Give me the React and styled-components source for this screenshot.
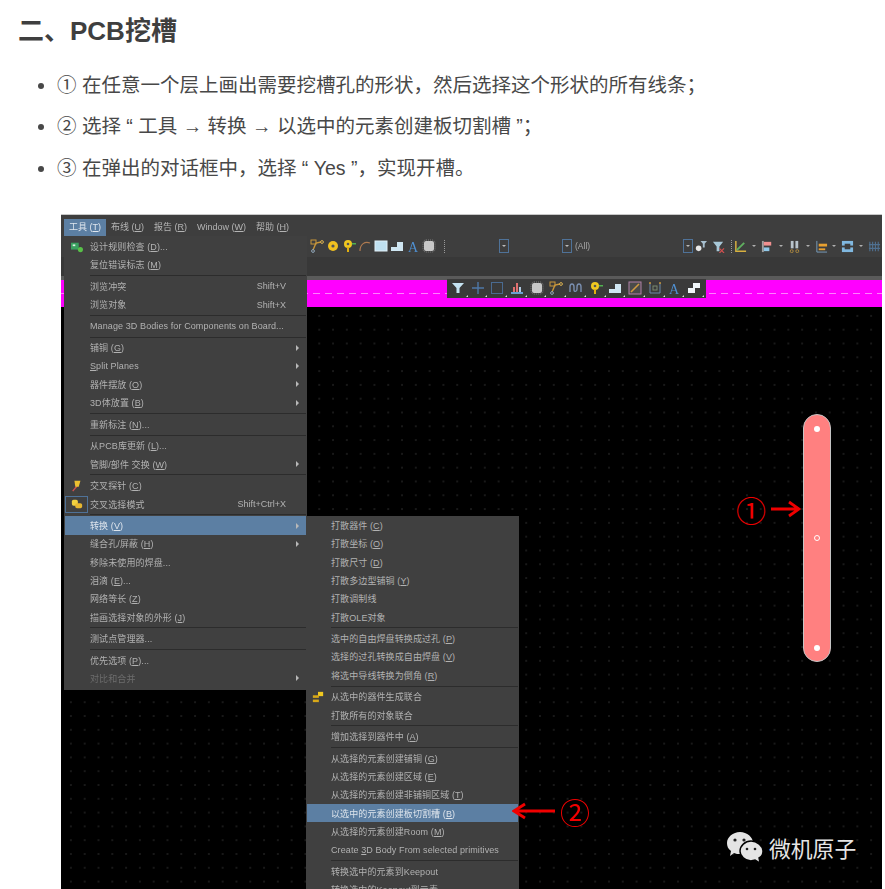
import React from "react";
import styled, { createGlobalStyle } from "styled-components";

const Icons = {
  route: <><path d="M3 11 L6 4 L11 3" stroke="#c8963a" strokeWidth="1.4" fill="none" /><rect x="1" y="1" width="5" height="4" fill="none" stroke="#c8963a" /><circle cx="3" cy="12" r="1.4" fill="none" stroke="#8fa5b8" /><circle cx="12" cy="3" r="1.4" fill="none" stroke="#d8b050" /></>,
  pad: <><circle cx="7" cy="7" r="5" fill="#f0c020" /><circle cx="7" cy="7" r="1.6" fill="#555" /></>,
  key: <><circle cx="6" cy="5" r="4" fill="#f0c820" /><circle cx="6" cy="5" r="1.3" fill="#555" /><rect x="5" y="8" width="2" height="5" fill="#e0b010" /><rect x="10" y="4" width="4" height="1.5" fill="#50b050" /></>,
  arc: <path d="M2 12 C2 5 7 2 12 4" stroke="#b07a50" strokeWidth="1.2" fill="none" />,
  rect: <rect x="1" y="2" width="12" height="10" fill="#bfe0f0" stroke="#e0f0f8" />,
  poly: <path d="M1 12 L1 8 L7 8 L7 3 L13 3 L13 12 Z" fill="#cfe6f2" />,
  text: <text x="7" y="12.5" fontSize="14" fontFamily="Liberation Serif, serif" fill="#4f8fd0" textAnchor="middle">A</text>,
  chip: <><rect x="2" y="2" width="10" height="10" rx="2" fill="#c8c8c8" /><rect x="1" y="1" width="12" height="12" rx="3" fill="none" stroke="#808080" strokeDasharray="1 1" /></>,
  funnel: <path d="M1 2 H13 L8.5 7 V12 H5.5 V7 Z" fill="#c5e3f2" />,
  plus: <path d="M7 1 V13 M1 7 H13" stroke="#4f78a8" strokeWidth="1.4" />,
  square: <rect x="1.5" y="1.5" width="11" height="11" fill="none" stroke="#4a6a90" />,
  bars: <><rect x="1" y="11" width="12" height="2" fill="#6aa0d0" /><rect x="3" y="6" width="2" height="5" fill="#e07070" /><rect x="6" y="2" width="2" height="9" fill="#e07070" /><rect x="9" y="6" width="2" height="5" fill="#b0c8e0" /></>,
  wave: <path d="M1 11 V6 C1 2 5 2 5 6 V9 C5 11 8 11 8 8 V6 C8 2 12 2 12 6 V11" stroke="#7a8fb0" strokeWidth="1.4" fill="none" />,
  boxLine: <><rect x="1" y="1" width="12" height="12" fill="#4a4a4a" stroke="#b080a8" /><path d="M3 11 L11 3" stroke="#d09a40" strokeWidth="1.6" /></>,
  cup: <><path d="M2 2 V12 H12 V2" stroke="#6a88a8" fill="none" /><rect x="5" y="5" width="4" height="4" fill="none" stroke="#7a8a70" /><circle cx="2" cy="2" r="1" fill="#c8963a" /><circle cx="12" cy="2" r="1" fill="#c8963a" /></>,
  stairs: <path d="M1 12 V7 H6 V2 H13 V7 H8 V12 Z" fill="#f0f6fa" />,
  searchFilter: <><circle cx="5" cy="9" r="3" fill="#e8e8e8" /><path d="M7 1 H14 L11.5 4 V8 H9.5 V4 Z" fill="#a8c0d0" /></>,
  redFilter: <><path d="M1 2 H12 L8 7 V12 H5 V7 Z" fill="#a8c8d8" /><path d="M8 9 L13 14 M13 9 L8 14" stroke="#d05050" strokeWidth="1.2" /></>,
  align: <><path d="M2 1 V12 H13" stroke="#d8b040" strokeWidth="1.6" fill="none" /><path d="M3 11 L11 3" stroke="#60b060" strokeWidth="2" /></>,
  pink: <><rect x="1" y="1" width="2" height="12" fill="#a0a0a0" /><rect x="3" y="2" width="8" height="4" fill="#f09090" /><rect x="3" y="8" width="6" height="4" fill="#90c8e8" /></>,
  binoculars: <><rect x="3" y="1" width="3" height="8" fill="#b8c4cc" /><rect x="8" y="1" width="3" height="8" fill="#b8c4cc" /><circle cx="4" cy="12" r="1.6" fill="none" stroke="#b08a40" /><circle cx="10" cy="12" r="1.6" fill="none" stroke="#b08a40" /></>,
  orange: <><path d="M2 1 V13 H13" stroke="#7aa0c0" fill="none" /><rect x="4" y="4" width="9" height="3" fill="#e8a030" /><rect x="4" y="9" width="7" height="2" fill="#e8a030" /></>,
  blueSwap: <><rect x="1" y="1" width="12" height="5" fill="#80b8e0" /><rect x="1" y="8" width="12" height="5" fill="#80b8e0" /><rect x="4" y="4" width="6" height="6" fill="#3e3e3e" /></>,
  grid: <path d="M2 2 V12 M5 2 V12 M8 2 V12 M11 2 V12 M1 5 H13 M1 9 H13" stroke="#4f7090" strokeWidth="1.2" />,
  drc: <><rect x="0" y="2" width="9" height="8" fill="#3aa060" /><rect x="2" y="4" width="3" height="2" fill="#d8f0e0" /><circle cx="11" cy="10" r="3" fill="#58c048" /></>,
  probe: <><path d="M2 13 L7 7" stroke="#d05050" strokeWidth="1.6" /><path d="M4 1 H11 L9 8 H5 Z" fill="#ecc030" /></>,
  cross: <><rect x="1" y="2" width="7" height="7" rx="2" fill="#f0d040" /><rect x="5" y="6" width="8" height="6" rx="2" fill="#e8b830" /></>,
  union: <><rect x="7" y="1" width="6" height="5" fill="#f0c820" /><rect x="1" y="5" width="7" height="3" fill="#d8a818" /><rect x="1" y="10" width="7" height="3" fill="#d8a818" /></>,
};

const mainTools = ["route", "pad", "key", "arc", "rect", "poly", "text", "chip"];
const rightTools = [
  ["searchFilter", 14], ["redFilter", 22], ["sep", 5], ["align", 13.4], ["caret", 13.4], ["pink", 13.4],
  ["caret", 13.4], ["binoculars", 13.4], ["caret", 13.4], ["orange", 13.4], ["caret", 13.4],
  ["blueSwap", 13.4], ["caret", 13.4], ["grid", 13.4],
];
const floatTools = ["funnel", "plus", "square", "bars", "chip", "route", "wave", "key", "poly", "boxLine", "cup", "text", "stairs"];

const menuBar = [
  { label: "工具 (&T)", active: true },
  { label: "布线 (&U)" },
  { label: "报告 (&R)" },
  { label: "Window (&W)" },
  { label: "帮助 (&H)" },
];

const toolsMenu = [
  { label: "设计规则检查 (&D)...", icon: "drc" },
  { label: "复位错误标志 (&M)" },
  "sep",
  { label: "浏览冲突", shortcut: "Shift+V" },
  { label: "浏览对象", shortcut: "Shift+X" },
  "sep",
  { label: "Manage 3D Bodies for Components on Board..." },
  "sep",
  { label: "铺铜 (&G)", more: true },
  { label: "&Split Planes", more: true },
  { label: "器件摆放 (&O)", more: true },
  { label: "3D体放置 (&B)", more: true },
  "sep",
  { label: "重新标注 (&N)..." },
  "sep",
  { label: "从PCB库更新 (&L)..." },
  { label: "管脚/部件 交换 (&W)", more: true },
  "sep",
  { label: "交叉探针 (&C)", icon: "probe" },
  { label: "交叉选择模式", shortcut: "Shift+Ctrl+X", icon: "cross", boxed: true },
  "sep",
  { label: "转换 (&V)", more: true, active: true },
  { label: "缝合孔/屏蔽 (&H)", more: true },
  { label: "移除未使用的焊盘..." },
  { label: "泪滴 (&E)..." },
  { label: "网络等长 (&Z)" },
  { label: "描画选择对象的外形 (&J)" },
  "sep",
  { label: "测试点管理器..." },
  "sep",
  { label: "优先选项 (&P)..." },
  { label: "对比和合并", more: true, disabled: true },
];

const convertMenu = [
  { label: "打散器件 (&C)" },
  { label: "打散坐标 (&O)" },
  { label: "打散尺寸 (&D)" },
  { label: "打散多边型铺铜 (&Y)" },
  { label: "打散调制线" },
  { label: "打散OLE对象" },
  "sep",
  { label: "选中的自由焊盘转换成过孔 (&P)" },
  { label: "选择的过孔转换成自由焊盘 (&V)" },
  { label: "将选中导线转换为倒角 (&R)" },
  "sep",
  { label: "从选中的器件生成联合", icon: "union" },
  { label: "打散所有的对象联合" },
  "sep",
  { label: "增加选择到器件中 (&A)" },
  "sep",
  { label: "从选择的元素创建铺铜 (&G)" },
  { label: "从选择的元素创建区域 (&E)" },
  { label: "从选择的元素创建非铺铜区域 (&T)" },
  { label: "以选中的元素创建板切割槽 (&B)", active: true },
  { label: "从选择的元素创建Room (&M)" },
  { label: "Create &3D Body From selected primitives" },
  "sep",
  { label: "转换选中的元素到Keepout" },
  { label: "转换选中的Keepout到元素" },
];

// "&X" marks the mnemonic letter, same as a real windows menu string
const Mnemonic = ({ text }) => {
  const [before, after] = text.split("&");
  if (after === undefined) return text;
  return (
    <>
      {before}
      <u>{after[0]}</u>
      {after.slice(1)}
    </>
  );
};

const Icon = ({ name, size = 14 }) => (
  <svg width={size} height={size} viewBox="0 0 14 14">
    {Icons[name]}
  </svg>
);

const MenuList = ({ items, iconWidth, trailing }) =>
  items.map((item, index) =>
    item === "sep" ? (
      <Separator key={index} $inset={iconWidth} />
    ) : (
      <MenuRow key={index} $active={item.active} $disabled={item.disabled}>
        <MenuIcon $width={iconWidth} $boxed={item.boxed}>
          {item.icon && <Icon name={item.icon} size={12} />}
        </MenuIcon>
        <MenuLabel>
          <Mnemonic text={item.label} />
        </MenuLabel>
        {item.shortcut && <Shortcut>{item.shortcut}</Shortcut>}
        {trailing && <MenuArrow $hidden={!item.more} />}
      </MenuRow>
    )
  );

const renderTool = (name) => {
  if (name === "caret") return <Caret />;
  if (name === "sep") return <ToolDivider />;
  return <Icon name={name} size={13} />;
};

const App = () => {
  return (
    <Page>
      <GlobalStyle />
      <Heading>二、PCB挖槽</Heading>
      <Steps>
        <li>① 在任意一个层上画出需要挖槽孔的形状，然后选择这个形状的所有线条；</li>
        <li>② 选择 “ 工具 → 转换 → 以选中的元素创建板切割槽 ”；</li>
        <li>③ 在弹出的对话框中，选择 “ Yes ”，实现开槽。</li>
      </Steps>

      <Shot>
        <TopEdge />
        <Chrome>
          <MenuBar>
            {menuBar.map((item) => (
              <MenuBarItem key={item.label} $active={item.active}>
                <Mnemonic text={item.label} />
              </MenuBarItem>
            ))}
          </MenuBar>
          <Toolbar>
            {mainTools.map((name) => (
              <ToolSlot key={name} $width={16}>
                <Icon name={name} size={14} />
              </ToolSlot>
            ))}
            <ToolDivider $gap={7} />
            <DropBox $gap={54} />
            <DropBox $gap={53} />
            <AllLabel>(All)</AllLabel>
            <DropBox $gap={92} />
            {rightTools.map(([name, width], index) => (
              <ToolSlot key={index} $width={width}>
                {renderTool(name)}
              </ToolSlot>
            ))}
          </Toolbar>
          <StatusStrip />
          <StripRule />
        </Chrome>
        <LayerStrip>
          <DashLine />
        </LayerStrip>
        <Canvas />

        <FloatBar>
          {floatTools.map((name, index) => (
            <FloatTool key={index}>
              <Icon name={name} size={14} />
            </FloatTool>
          ))}
        </FloatBar>

        <ToolsMenu>
          <MenuList items={toolsMenu} iconWidth={26} trailing />
        </ToolsMenu>
        <ConvertMenu>
          <MenuList items={convertMenu} iconWidth={25} />
        </ConvertMenu>

        <Slot>
          <Via $top={9} />
          <Via $top={118} $ring />
          <Via $top={228} />
        </Slot>

        <NoteOne>
          <NoteDigit>①</NoteDigit>
          <svg width="31" height="18" viewBox="0 0 31 18">
            <path d="M1 9 H29 M19 2 L29 9 L19 16" stroke="#f00000" strokeWidth="2.8" fill="none" />
          </svg>
        </NoteOne>
        <NoteTwo>
          <svg width="44" height="18" viewBox="0 0 44 18">
            <path d="M43 9 H2 M13 2 L2 9 L13 16" stroke="#f00000" strokeWidth="2.8" fill="none" />
          </svg>
          <NoteDigit>②</NoteDigit>
        </NoteTwo>

        <Watermark>
          <svg width="36" height="32" viewBox="0 0 36 32">
            <path d="M13 0 C20 0 26 5 26 11 C26 17 20 22 13 22 C11 22 9 22 7 21 L3 24 L4 19 C1 17 0 14 0 11 C0 5 6 0 13 0 Z" fill="#e4e4e4" />
            <path d="M24 9 C30 9 36 14 36 19 C36 22 34 25 32 26 L33 31 L28 28 C27 28 25 29 24 29 C18 29 13 24 13 19 C13 14 18 9 24 9 Z" fill="#e4e4e4" stroke="#000" strokeWidth="1.4" />
            <circle cx="8" cy="8" r="1.6" fill="#222" />
            <circle cx="17" cy="8" r="1.6" fill="#222" />
            <circle cx="20" cy="17" r="1.3" fill="#222" />
            <circle cx="28" cy="17" r="1.3" fill="#222" />
          </svg>
          <span>微机原子</span>
        </Watermark>
      </Shot>
    </Page>
  );
};

export default App;

const GlobalStyle = createGlobalStyle`
  html, body {
    margin: 0;
    background: #fff;
    overflow: hidden;
  }
`;

const sans = `"Liberation Sans", "Noto Sans CJK SC", sans-serif`;

const Page = styled.div`
  height: 889px;
  overflow: hidden;
  padding: 12px 0 0 18px;
  box-sizing: border-box;
  font-family: ${sans};
  color: #3f3f3f;
`;

const Heading = styled.h2`
  margin: 0;
  font-size: 26px;
  line-height: 38px;
  font-weight: 700;
`;

const Steps = styled.ul`
  margin: 14.5px 0 24.5px;
  padding: 0 0 0 39px;
  font-size: 19.5px;
  line-height: 41.5px;
  color: #484848;
`;

const Shot = styled.div`
  position: relative;
  width: 821px;
  height: 676px;
  margin-left: 43px;
  display: flex;
  flex-direction: column;
  background: #000;
  overflow: hidden;
`;

const TopEdge = styled.div`
  height: 1px;
  background: #c8c8c8;
`;

const Chrome = styled.div`
  background: #3e3e3e;
  filter: blur(0.4px);
`;

const MenuBar = styled.div`
  height: 21px;
  display: flex;
  align-items: center;
  padding: 4px 0 0 3px;
  box-sizing: border-box;
  font-size: 9px;
  color: #b4b4b4;
`;

const MenuBarItem = styled.div`
  height: 17px;
  line-height: 17px;
  padding: 0 5px;
  background: ${(p) => (p.$active ? "#5c7fa3" : "transparent")};
  color: ${(p) => (p.$active ? "#dfe6ee" : "inherit")};
`;

const Toolbar = styled.div`
  height: 21px;
  display: flex;
  align-items: center;
  padding-left: 248px;
`;

const ToolSlot = styled.div`
  width: ${(p) => p.$width}px;
  flex: none;
  display: flex;
  justify-content: center;
`;

const ToolDivider = styled.div`
  width: 0;
  height: 13px;
  margin-left: ${(p) => p.$gap || 0}px;
  border-left: 1px dotted #999;
`;

const DropBox = styled.div`
  width: 8px;
  height: 12px;
  margin-left: ${(p) => p.$gap}px;
  flex: none;
  border: 1px solid #4f7298;
  position: relative;

  &::after {
    content: "";
    position: absolute;
    left: 2px;
    top: 5px;
    border: 2px solid transparent;
    border-top-color: #bbb;
  }
`;

const AllLabel = styled.span`
  width: 16px;
  flex: none;
  margin-left: 3px;
  font-size: 8.5px;
  color: #a8a8a8;
`;

const Caret = styled.div`
  border: 2px solid transparent;
  border-top-color: #b0b0b0;
  margin-top: 2px;
`;

const StatusStrip = styled.div`
  height: 19px;
  background: #383838;
`;

const StripRule = styled.div`
  height: 4px;
  background: #5a5a5a;
`;

const LayerStrip = styled.div`
  height: 27px;
  background: #ff00ff;
  display: flex;
  align-items: center;
  flex: none;
`;

const DashLine = styled.div`
  width: 100%;
  height: 1px;
  background: repeating-linear-gradient(90deg, #ff80ff 0 7px, transparent 7px 12px);
`;

const Canvas = styled.div`
  flex: 1;
  background-color: #000;
  background-image: radial-gradient(circle, #303030 0.6px, transparent 0.8px);
  background-size: 13.8px 13.8px;
  background-position: 3px 2px;
`;

const FloatBar = styled.div`
  position: absolute;
  left: 386px;
  top: 65px;
  width: 259px;
  height: 19px;
  padding-left: 1px;
  box-sizing: border-box;
  display: flex;
  align-items: center;
  background: #3a3a3a;
  filter: blur(0.4px);
`;

const FloatTool = styled.div`
  position: relative;
  width: 19.7px;
  flex: none;
  display: flex;
  justify-content: center;

  &::after {
    content: "";
    position: absolute;
    right: 0;
    bottom: -2px;
    border: 1.5px solid transparent;
    border-right-color: #ddd;
    border-bottom-color: #ddd;
  }
`;

const Menu = styled.div`
  position: absolute;
  background: #404040;
  box-sizing: border-box;
  font-size: 9px;
  color: #b2b2b2;
  filter: blur(0.4px);
`;

const ToolsMenu = styled(Menu)`
  left: 3px;
  top: 22px;
  width: 243px;
  height: 454px;
  padding: 2px 1px 0;
`;

const ConvertMenu = styled(Menu)`
  left: 245px;
  top: 302px;
  width: 213px;
  height: 380px;
  padding: 1px 1px 0;
`;

const MenuRow = styled.div`
  height: 18.3px;
  display: flex;
  align-items: center;
  white-space: nowrap;
  background: ${(p) => (p.$active ? "#5c7fa3" : "transparent")};
  color: ${(p) => (p.$active ? "#dde4ec" : p.$disabled ? "#6c6c6c" : "inherit")};
`;

const MenuIcon = styled.div`
  width: ${(p) => p.$width - 3}px;
  height: 17px;
  flex: none;
  margin-right: 2px;
  display: flex;
  align-items: center;
  justify-content: center;
  box-sizing: border-box;
  border: 1px solid ${(p) => (p.$boxed ? "#4f7298" : "transparent")};
`;

const MenuLabel = styled.span`
  flex: 1;
  letter-spacing: 0.1px;
`;

const Shortcut = styled.span`
  margin-right: 0;
`;

const MenuArrow = styled.i`
  width: 0;
  height: 0;
  margin: 0 7px 0 10px;
  border: 3px solid transparent;
  border-left-color: ${(p) => (p.$hidden ? "transparent" : "#b8b8b8")};
  border-right-width: 0;
  flex: none;
`;

const Separator = styled.div`
  height: 3.25px;
  margin-left: ${(p) => p.$inset - 1}px;
  display: flex;
  align-items: center;

  &::after {
    content: "";
    flex: 1;
    height: 1px;
    background: #2c2c2c;
  }
`;

const Slot = styled.div`
  position: absolute;
  left: 742px;
  top: 200px;
  width: 28px;
  height: 248px;
  box-sizing: border-box;
  border-radius: 14px;
  background: #ff8080;
  border: 1px solid #c4c4c4;
`;

const Via = styled.div`
  position: absolute;
  left: 10px;
  top: ${(p) => p.$top + 2}px;
  width: 6px;
  height: 6px;
  border-radius: 50%;
  box-sizing: border-box;
  background: ${(p) => (p.$ring ? "#ff8080" : "#fff")};
  border: ${(p) => (p.$ring ? "1.5px solid #fff" : "none")};
`;

const Note = styled.div`
  position: absolute;
  display: flex;
  align-items: center;
  gap: 4px;
  color: #f00000;
`;

const NoteOne = styled(Note)`
  left: 675px;
  top: 278px;
`;

const NoteTwo = styled(Note)`
  left: 451px;
  top: 580px;
`;

const NoteDigit = styled.span`
  font-family: "Noto Sans CJK SC", sans-serif;
  font-size: 30px;
  line-height: 34px;
  font-weight: 400;
`;

const Watermark = styled.div`
  position: absolute;
  left: 666px;
  top: 618px;
  display: flex;
  align-items: center;
  gap: 6px;
  color: #e6e6e6;
  font-family: "Noto Sans CJK SC", sans-serif;
  font-size: 21.8px;
`;
